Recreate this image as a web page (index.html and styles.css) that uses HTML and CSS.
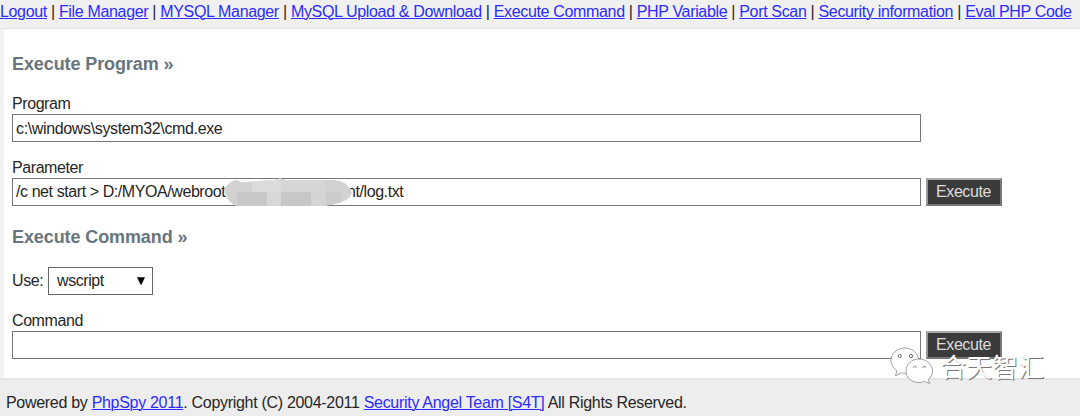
FILE: index.html
```html
<!DOCTYPE html>
<html lang="en">
<head>
<meta charset="utf-8">
<title>PhpSpy 2011</title>
<link rel="stylesheet" href="styles.css">
</head>
<body>
<nav class="nav"><a href="#">Logout</a> | <a href="#">File Manager</a> | <a href="#">MYSQL Manager</a> | <a href="#">MySQL Upload &amp; Download</a> | <a href="#">Execute Command</a> | <a href="#">PHP Variable</a> | <a href="#">Port Scan</a> | <a href="#">Security information</a> | <a href="#">Eval PHP Code</a></nav>
<main class="main">
  <h2 class="title title-first">Execute Program »</h2>
  <div class="label label-program">Program</div>
  <div class="row"><div class="field field-program"><span>c:\windows\system32\cmd.exe</span></div></div>
  <div class="label label-parameter">Parameter</div>
  <div class="row">
    <div class="field"><span class="value-start">/c net start &gt; D:/MYOA/webroot</span><span class="value-end">nt/log.txt</span>
      <svg class="redaction" width="130" height="30" viewBox="0 0 130 30">
        <defs><clipPath id="smudge"><path d="M1 11 Q7 2 14 2 Q18 5 24 4 L36 3 L52 2 Q57 -1 62 2 L112 2 Q126 4 129 15 Q126 23 112 26 L102 28 L14 28 Q6 26 3 17Z"/></clipPath></defs>
        <g clip-path="url(#smudge)">
          <path fill="#d2d2d2" d="M0 0h130v30H0z"/>
          <path fill="#dcdcdc" d="M29 0h29v14H29z"/>
          <path fill="#d6d6d6" d="M58 0h44v14H58z"/>
          <path fill="#c8c8c8" d="M14 14h30v15H14z"/>
          <path fill="#d7d7d7" d="M44 14h14v15H44z"/>
          <path fill="#c7c7c7" d="M58 14h30v15H58z"/>
          <path fill="#d4d4d4" d="M88 14h15v15H88z"/>
          <path fill="#cccccc" d="M103 14h15v15h-15z"/>
        </g>
      </svg>
    </div>
    <div class="button">Execute</div>
  </div>
  <h2 class="title title-second">Execute Command »</h2>
  <div class="use"><span class="use-label">Use:</span><div class="select"><span>wscript</span><svg width="8" height="8" viewBox="0 0 8 8"><path d="M0 .3h8L4.6 7.6H3.4z"/></svg></div></div>
  <div class="label label-command">Command</div>
  <div class="row"><div class="field"></div><div class="button">Execute</div></div>
</main>
<footer class="footer">Powered by <a href="#">PhpSpy 2011</a>. Copyright (C) 2004-2011 <a href="#">Security Angel Team [S4T]</a> All Rights Reserved.</footer>
<div class="watermark">
  <svg width="44" height="40" viewBox="0 0 44 40">
    <g fill="#fff" stroke="#8a8a8a" stroke-width=".8">
      <path d="M15 1C7 1 1 6.600 1 13.500c0 4.500 2.200 7.800 5.800 10.200L5.500 28.800l6-3c6 1.500 10 .5 13-1.500 3-3 5-7 4.500-11C28 6 22 1 15 1z"/>
      <path d="M29 12c-7.500 0-13 5.500-13 12s5.500 11.500 13 11.500c2.200 0 4-.4 5.600-1.100l5 2.200-1.300-4C41 30.500 42.500 27.500 42.500 24 42.500 17.500 36.500 12 29 12z"/>
    </g>
    <g fill="#fff" stroke="#666" stroke-width="1"><circle cx="9.700" cy="9" r="1.600"/><circle cx="21" cy="9" r="1.600"/></g>
    <g fill="none" stroke="#777" stroke-width="1"><path d="M23 20.500q1.500-2.500 3.500 0M32.500 20.500q1.500-2.500 3.500 0"/></g>
  </svg>
  <span>合天智汇</span>
</div>
</body>
</html>
```
FILE: styles.css
```css
* { box-sizing: border-box; }
body {
  margin: 0;
  width: 1080px;
  height: 416px;
  overflow: hidden;
  position: relative;
  background: #fff;
  color: #262626;
  font: 16px/18px "Liberation Sans", Arial, sans-serif;
  letter-spacing: -0.42px;
  white-space: nowrap;
}
a { color: #2c2cff; text-decoration: underline; text-underline-offset: 1px; text-decoration-thickness: 1px; }
.nav {
  height: 29px;
  padding-top: 3px;
  background: #f0f0f0;
  border-bottom: 1px solid #e2e2e2;
  letter-spacing: -0.34px;
}
.main {
  height: 349px;
  padding: 25px 0 0 12px;
  background: linear-gradient(90deg, #f0f0f0 0, #f3f3f3 3px, #fff 5px);
}
.title { margin: 0; font-size: 18px; line-height: 20px; letter-spacing: -0.1px; color: #68757c; }
.label-program { margin-top: 21px; }
.label { padding-bottom: 1px; }
.label-parameter { margin-top: 17px; }
.label-command { margin-top: 17px; }
.row { display: flex; gap: 5px; }
.field {
  position: relative;
  display: flex;
  width: 909px;
  height: 28px;
  padding: 4px 3px;
  background: #fff;
  border: 1px solid #777;
}
.field-program { padding-top: 5px; letter-spacing: -0.36px; }
.value-start { width: 331px; }
.redaction { position: absolute; left: 210px; top: -1px; }
.button {
  width: 76px;
  height: 28px;
  padding-right: 1px;
  border: 2px solid;
  border-color: #aaa #777 #777 #999;
  background: #3b3b3b;
  color: #ddd;
  text-align: center;
  line-height: 23px;
}
.title-second { margin-top: 21px; }
.use { display: flex; margin-top: 20px; height: 28px; align-items: center; }
.use-label { width: 36px; }
.select {
  display: flex;
  justify-content: space-between;
  align-items: center;
  width: 105px;
  height: 28px;
  padding: 0 7px 0 8px;
  border: 1px solid #666;
}
.footer {
  height: 38px;
  padding: 14px 0 0 6px;
  background: #ededed;
  border-top: 2px solid #e5e5e5;
  letter-spacing: -0.3px;
}
.watermark {
  position: absolute;
  left: 890px;
  top: 347px;
  display: flex;
  height: 40px;
  color: #fff;
  font: 26px/38px "Noto Sans CJK SC", sans-serif;
  letter-spacing: 0;
  text-shadow: 1px 1px 0 #777;
}
.watermark span { margin-left: 6px; }
```
